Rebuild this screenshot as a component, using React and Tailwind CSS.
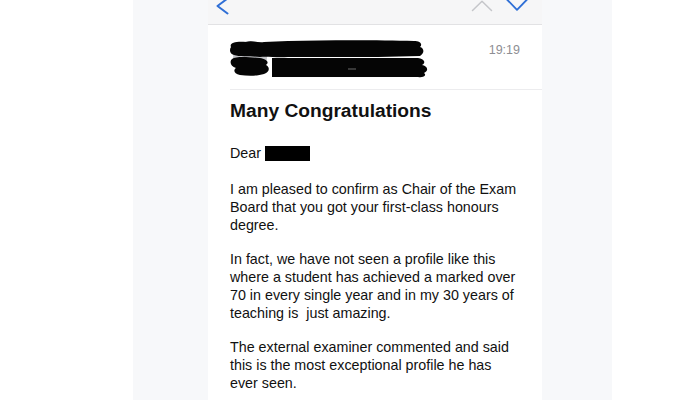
// Mail message view - redacted congratulations email
const BackChevron = () => (
  <svg width="30" height="24" viewBox="0 0 30 24" className="overflow-visible">
    <path d="M19.5 -1.5 L9.5 6 L19.5 13.5" fill="none" stroke="#2f6fd6" strokeWidth="2" strokeLinecap="round" strokeLinejoin="round" />
  </svg>
);

const UpChevron = () => (
  <svg width="22" height="24" viewBox="0 0 22 24">
    <path d="M1.5 10.5 L11 1.2 L20.5 10.5" fill="none" stroke="#c5c6ca" strokeWidth="1.5" strokeLinecap="round" strokeLinejoin="round" />
  </svg>
);

const DownChevron = () => (
  <svg width="22" height="24" viewBox="0 0 22 24" className="overflow-visible">
    <path d="M1 -0.5 L11 9.8 L21 -0.5" fill="none" stroke="#2f6fd6" strokeWidth="1.8" strokeLinecap="round" strokeLinejoin="round" />
  </svg>
);

// scribbled-out sender name and address
const Redaction = () => (
  <svg width="204" height="42" viewBox="0 0 204 42">
    <circle cx="22" cy="20" r="17" fill="#c3c4c8" />
    <path
      d="M3 9 C1 5 8 3 18 4 C24 2 30 5 36 4 L60 3 C100 2 150 2 186 3 C192 3 195 6 192 9 C196 10 197 15 192 18 L150 19 L60 19 C48 20 40 18 32 19 C24 18 12 19 6 17 C2 16 1 12 3 9 Z"
      fill="#050505"
    />
    <path
      d="M4 21 C8 18 20 19 32 20 C38 21 42 24 38 27 C42 29 42 34 36 36 C30 38 20 38 12 37 C6 36 5 32 8 30 C3 29 1 24 4 21 Z"
      fill="#050505"
    />
    <path
      d="M44 20 L190 20 C197 21 198 25 194 27 C200 28 201 33 196 35 C199 37 196 40 190 39 L44 39 Z"
      fill="#050505"
    />
    <path d="M120 31 L128 31" stroke="#6b6b6b" strokeWidth="1" />
  </svg>
);

const Para = ({ lines, className = '' }) => (
  <p className={`text-[14.3px] leading-[18px] whitespace-nowrap ${className}`}>
    {lines.map((line, i) => (
      <span key={i} className="block">{line}</span>
    ))}
  </p>
);

export default function App() {
  return (
    <div className="flex h-[400px] w-[700px] overflow-hidden bg-white text-[#111] font-['Liberation_Sans',Arial,sans-serif]">
      <div className="w-[133px] shrink-0 bg-white" />
      <div className="w-[75px] shrink-0 bg-[#f7f8fa]" />

      {/* Phone screen */}
      <div className="w-[334px] shrink-0 bg-white flex flex-col">
        {/* Nav bar */}
        <div className="h-[25px] shrink-0 bg-[#f6f6f7] border-b border-[#e2e2e4] flex items-start">
          <BackChevron />
          <div className="flex-1" />
          <div className="mr-[13px]">
            <UpChevron />
          </div>
          <div className="mr-[14px]">
            <DownChevron />
          </div>
        </div>

        {/* Sender row */}
        <div className="h-[64px] shrink-0 flex items-start justify-between pl-[20px] pr-[22px] pt-[13px]">
          <Redaction />
          <span className="mt-[5px] text-[12.5px] leading-[15px] text-[#8e8e93]">19:19</span>
        </div>
        <div className="ml-[22px] h-px bg-[#ececee]" />

        {/* Message body */}
        <div className="px-[22px]">
          <h1 className="mt-[9px] text-[19.2px] leading-[24px] font-bold">Many Congratulations</h1>

          <p className="mt-[21px] text-[14.3px] leading-[18px] flex items-center">
            Dear
            <span className="ml-[4px] inline-block w-[45px] h-[15px] bg-black" />
          </p>

          <Para
            className="mt-[18px]"
            lines={[
              'I am pleased to confirm as Chair of the Exam',
              'Board that you got your first-class honours',
              'degree.',
            ]}
          />

          <Para
            className="mt-[16px]"
            lines={[
              'In fact, we have not seen a profile like this',
              'where a student has achieved a marked over',
              '70 in every single year and in my 30 years of',
              'teaching is\u00a0 just amazing.',
            ]}
          />

          <Para
            className="mt-[16px]"
            lines={[
              'The external examiner commented and said',
              'this is the most exceptional profile he has',
              'ever seen.',
            ]}
          />
        </div>
      </div>

      <div className="w-[70px] shrink-0 bg-[#f7f8fa]" />
      <div className="flex-1 bg-white" />
    </div>
  );
}
